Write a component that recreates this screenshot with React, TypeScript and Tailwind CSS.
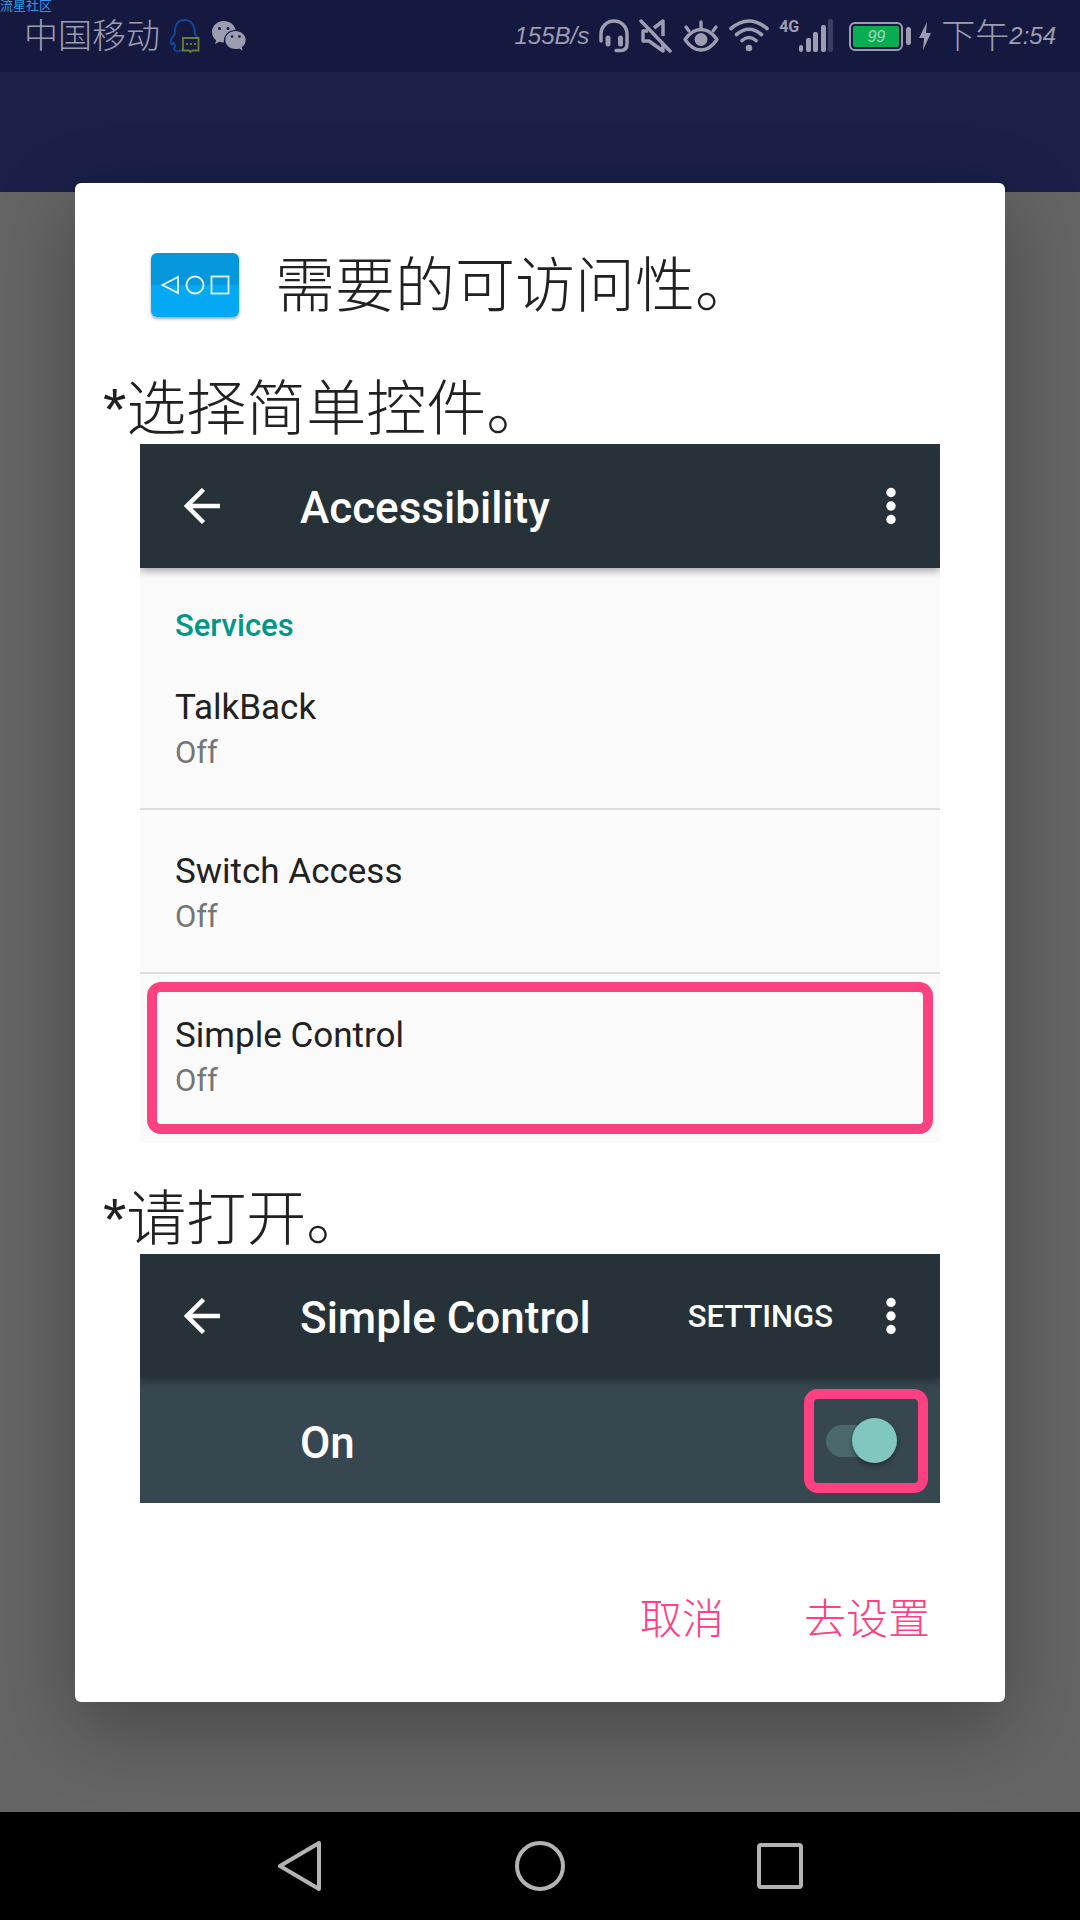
import { ReactNode } from "react";

const services = [
  { name: "TalkBack", state: "Off" },
  { name: "Switch Access", state: "Off" },
];

function QQIcon() {
  return (
    <svg width="30" height="34" viewBox="0 0 30 34" fill="none">
      <path
        d="M12 31c-3 2-7 2-8-1 0-1 1-2 1-3l-1-3c-1 1-2 2-3 1-1-3 1-7 4-10C4 6 8 1 14.500 1S25 6 25 15l2 3"
        stroke="#0d4a9e"
        strokeWidth="1.800"
        strokeLinecap="round"
        strokeLinejoin="round"
      />
      <path
        d="M13 19h15.500v12.500H22L20.500 33 19 31.500h-6z"
        stroke="#66802f"
        strokeWidth="1.800"
      />
      <path d="M16 24h2v2h-2zM20 24h2v2h-2zM24 24h2v2h-2z" fill="#66802f" />
    </svg>
  );
}

function WeChatIcon() {
  return (
    <svg width="34" height="30" viewBox="0 0 34 30">
      <path
        d="M12 0C5.300 0 0 4.800 0 11c0 3.400 1.700 6.300 4.200 8.300L3 23l4.300-2.200c1.300.400 3 .700 4.600.700C11 14 17 8.600 23.600 9 22.500 3.800 17.700 0 12 0z"
        fill="#9c9db1"
      />
      <path
        d="M23.500 10c-5.600 0-10.200 4-10.200 9s4.600 9 10.200 9c1.300 0 2.500-.200 3.600-.600l3.600 2-1-3.200c2.500-1.700 4-4.300 4-7.200 0-5-4.600-9-10.200-9z"
        fill="#9c9db1"
      />
      <g fill="#151940">
        <circle cx="7.500" cy="7.500" r="1.500" />
        <circle cx="16" cy="7.500" r="1.500" />
        <circle cx="20" cy="15.500" r="1.300" />
        <circle cx="27.500" cy="15.500" r="1.300" />
      </g>
    </svg>
  );
}

function HeadsetIcon() {
  return (
    <svg width="30" height="34" viewBox="0 0 30 34" fill="none" stroke="#9c9db1" strokeLinecap="round">
      <path
        d="M2 22v-7a13 13 0 0 1 26 0v10q0 6.500-6.500 6.500H17"
        strokeWidth="3.500"
      />
      <path d="M9 19v6M21.500 19v6" strokeWidth="5" />
    </svg>
  );
}

function MuteIcon() {
  return (
    <svg width="34" height="34" viewBox="0 0 34 34" fill="none" stroke="#9c9db1">
      <path
        d="M9 12H4v10h6l14 10v-8M15 9l9-7v15"
        strokeWidth="3.500"
        strokeLinejoin="round"
      />
      <path d="M2 2l29 30" strokeWidth="3.500" strokeLinecap="round" />
    </svg>
  );
}

function EyeIcon() {
  return (
    <svg width="36" height="34" viewBox="0 0 36 34" fill="none" stroke="#9c9db1" strokeWidth="3.300" strokeLinecap="round">
      <path d="M2 20.500Q9 10.500 18 10.500t16 10Q27 31 18 31T2 20.500z" strokeLinejoin="round" />
      <path d="M18 9V3M6 12L3 8M30 12l3-4" />
      <circle cx="18" cy="20.500" r="6.500" fill="#9c9db1" stroke="none" />
    </svg>
  );
}

function WifiIcon() {
  return (
    <svg width="40" height="34" viewBox="0 0 40 34" fill="none" stroke="#9c9db1" strokeWidth="3.600" strokeLinecap="round">
      <path d="M2 9.500q18-15 36 0M7.500 15.500q12.500-10.500 25 0M13 21.500q7-6 14 0" />
      <circle cx="20" cy="29" r="3.300" fill="#9c9db1" stroke="none" />
    </svg>
  );
}

function SignalIcon() {
  return (
    <svg width="34" height="34" viewBox="0 0 34 34" fill="#9c9db1">
      <rect x="0" y="26" width="4" height="7" rx="2" />
      <rect x="7" y="19" width="5" height="14" rx="2" />
      <rect x="14" y="13" width="5" height="20" rx="2" />
      <rect x="22" y="6" width="5" height="27" rx="2" />
      <rect x="29" y="0" width="5" height="33" rx="2" fill="#3b3f60" />
    </svg>
  );
}

function Battery() {
  return (
    <div className="flex items-center gap-[3px]">
      <div className="flex h-[29px] w-[54px] rounded-md border-2 border-[#9c9db1] p-0.5">
        <span className="flex-1 rounded-xs bg-[#08ac53] text-center text-base leading-[21px] text-[#a9d5bb] italic">
          99
        </span>
      </div>
      <div className="h-[18px] w-[5px] rounded-sm bg-[#9c9db1]" />
    </div>
  );
}

function StatusBar() {
  return (
    <div className="relative flex h-[72px] items-center justify-between bg-[#151940] pr-6 pl-6 text-[#9c9db1]">
      <span className="absolute top-0 left-0 text-[13px] leading-3 text-[#3396e8]">
        流星社区
      </span>
      <div className="flex items-center gap-2.5">
        <span className="text-[34px] leading-10 font-light">中国移动</span>
        <div className="flex items-center gap-3">
          <QQIcon />
          <WeChatIcon />
        </div>
      </div>
      <div className="flex items-center gap-2.5">
        <span className="text-2xl italic">155B/s</span>
        <HeadsetIcon />
        <MuteIcon />
        <EyeIcon />
        <WifiIcon />
        <div className="flex items-start">
          <span className="font-[Roboto] text-base leading-4 font-bold">4G</span>
          <SignalIcon />
        </div>
        <div className="flex items-center gap-2 pl-1.5">
          <Battery />
          <svg width="12" height="28" viewBox="0 0 12 28" fill="#9c9db1">
            <path d="M8 0L0 16h5L4 28l8-17H7z" />
          </svg>
        </div>
        <span className="flex items-center">
          <span className="text-[34px] leading-10 font-light">下午</span>
          <span className="text-2xl italic">2:54</span>
        </span>
      </div>
    </div>
  );
}

function BackButton() {
  return (
    <button aria-label="Back" className="flex w-[116px] shrink-0">
      <svg width="36" height="36" viewBox="0 0 36 36" fill="none" stroke="#fff" strokeWidth="4.500">
        <path d="M36 18H4M19.500 1.500L3 18l16.500 16.500" />
      </svg>
    </button>
  );
}

function MoreButton() {
  return (
    <button aria-label="More options">
      <svg width="10" height="38" viewBox="0 0 10 38" fill="#fff">
        <circle cx="5" cy="5.500" r="4.700" />
        <circle cx="5" cy="19" r="4.700" />
        <circle cx="5" cy="32.500" r="4.700" />
      </svg>
    </button>
  );
}

function AppBar({ title, children }: { title: string; children?: ReactNode }) {
  return (
    <div className="relative flex h-[124px] items-center bg-[#273238] pr-11 pl-11 text-white shadow-[0_3px_8px_rgba(0,0,0,0.35)]">
      <BackButton />
      <h2 className="flex-1 pt-1 text-[44px] leading-[52px] font-medium">{title}</h2>
      {children}
      <MoreButton />
    </div>
  );
}

function Service({ name, state }: { name: string; state: string }) {
  return (
    <>
      <p className="text-[35px] leading-[44px] text-[#212121]">{name}</p>
      <p className="text-[31px] leading-[46px] text-[#757575]">{state}</p>
    </>
  );
}

function AccessibilityList() {
  return (
    <div className="mx-[65px] overflow-hidden bg-[#fafafa] pb-[9px] font-[Roboto]">
      <AppBar title="Accessibility" />
      <h3 className="px-[35px] pt-[38px] text-[31px] leading-10 font-medium text-[#009688]">
        Services
      </h3>
      <ul>
        {services.map((service) => (
          <li
            key={service.name}
            className="border-b-2 border-[#dcdcdc] px-[35px] pt-10 pb-8"
          >
            <Service {...service} />
          </li>
        ))}
        <li className="mx-[7px] mt-2 rounded-[14px] border-10 border-[#ff4081] px-[18px] pt-[22px] pb-5">
          <Service name="Simple Control" state="Off" />
        </li>
      </ul>
    </div>
  );
}

function SimpleControl() {
  return (
    <div className="mx-[65px] overflow-hidden bg-[#37474f] font-[Roboto]">
      <AppBar title="Simple Control">
        <button className="mr-[53px] pt-1 text-[31px] font-medium">SETTINGS</button>
      </AppBar>
      <div className="flex items-center justify-between pt-[11px] pr-3 pb-2.5 pl-40 text-white">
        <label htmlFor="service" className="pt-1 text-[44px] leading-[52px] font-medium">
          On
        </label>
        <div className="flex h-[104px] w-[124px] items-center justify-end rounded-[14px] border-10 border-[#ff4081] pr-[21px]">
          <input
            id="service"
            type="checkbox"
            role="switch"
            defaultChecked
            className="flex h-8 w-[71px] appearance-none items-center justify-end rounded-full bg-[#4b696c] before:size-[45px] before:shrink-0 before:rounded-full before:bg-[#80c7bf] before:shadow-[0_3px_5px_rgba(0,0,0,0.35)] before:content-['']"
          />
        </div>
      </div>
    </div>
  );
}

function LauncherIcon() {
  return (
    <div className="flex h-16 w-22 items-center justify-center rounded-md bg-linear-to-b from-[#0597dc] from-50% to-[#03a9f4] to-50% shadow-[0_2px_3px_rgba(0,0,0,0.35)]">
      <svg width="70" height="20" viewBox="0 0 70 20" fill="none" stroke="#e6f5fd" strokeWidth="1.800">
        <path d="M18 2v16L2.500 10z" />
        <circle cx="35" cy="10" r="8.500" />
        <rect x="51.500" y="1.500" width="17" height="17" />
      </svg>
    </div>
  );
}

function Dialog() {
  return (
    <div
      role="dialog"
      aria-labelledby="dialog-title"
      className="z-10 col-start-1 row-start-1 mx-[75px] self-center rounded-md bg-white pt-[70px] pb-[58px] text-[#212121] shadow-[0_24px_80px_rgba(0,0,0,0.3)]"
    >
      <div className="flex items-center gap-9 px-[76px]">
        <LauncherIcon />
        <h1 id="dialog-title" className="pt-1 text-[60px] leading-[60px] font-light">
          需要的可访问性。
        </h1>
      </div>
      <p className="mt-[59px] px-7 text-[60px] leading-[68px] font-light">
        *选择简单控件。
      </p>
      <AccessibilityList />
      <p className="mt-[43px] px-7 text-[60px] leading-[68px] font-light">
        *请打开。
      </p>
      <SimpleControl />
      <div className="mt-[93px] flex justify-end gap-20 px-[75px] text-[42px] leading-12 font-light text-[#ff4081]">
        <button>取消</button>
        <button>去设置</button>
      </div>
    </div>
  );
}

function NavBar() {
  return (
    <nav className="flex h-[108px] items-center justify-center bg-black">
      <button aria-label="Back" className="flex w-60 justify-center">
        <svg width="50" height="50" viewBox="0 0 50 50" fill="none" stroke="#b3b3b3" strokeWidth="4" strokeLinejoin="round">
          <path d="M44 2v46L5 25z" />
        </svg>
      </button>
      <button aria-label="Home" className="flex w-60 justify-center">
        <svg width="50" height="50" viewBox="0 0 50 50" fill="none" stroke="#b3b3b3" strokeWidth="4">
          <circle cx="25" cy="25" r="23" />
        </svg>
      </button>
      <button aria-label="Recent apps" className="flex w-60 justify-center">
        <svg width="50" height="50" viewBox="0 0 50 50" fill="none" stroke="#b3b3b3" strokeWidth="4">
          <rect x="4" y="4" width="42" height="42" rx="2" />
        </svg>
      </button>
    </nav>
  );
}

export default function App() {
  return (
    <div className="flex min-h-screen flex-col bg-[#656565] font-['Liberation_Sans','Noto_Sans_CJK_SC',sans-serif]">
      <StatusBar />
      <main className="grid flex-1 overflow-hidden">
        <div className="col-start-1 row-start-1 h-[120px] bg-[#1a2047]" />
        <Dialog />
      </main>
      <NavBar />
    </div>
  );
}
